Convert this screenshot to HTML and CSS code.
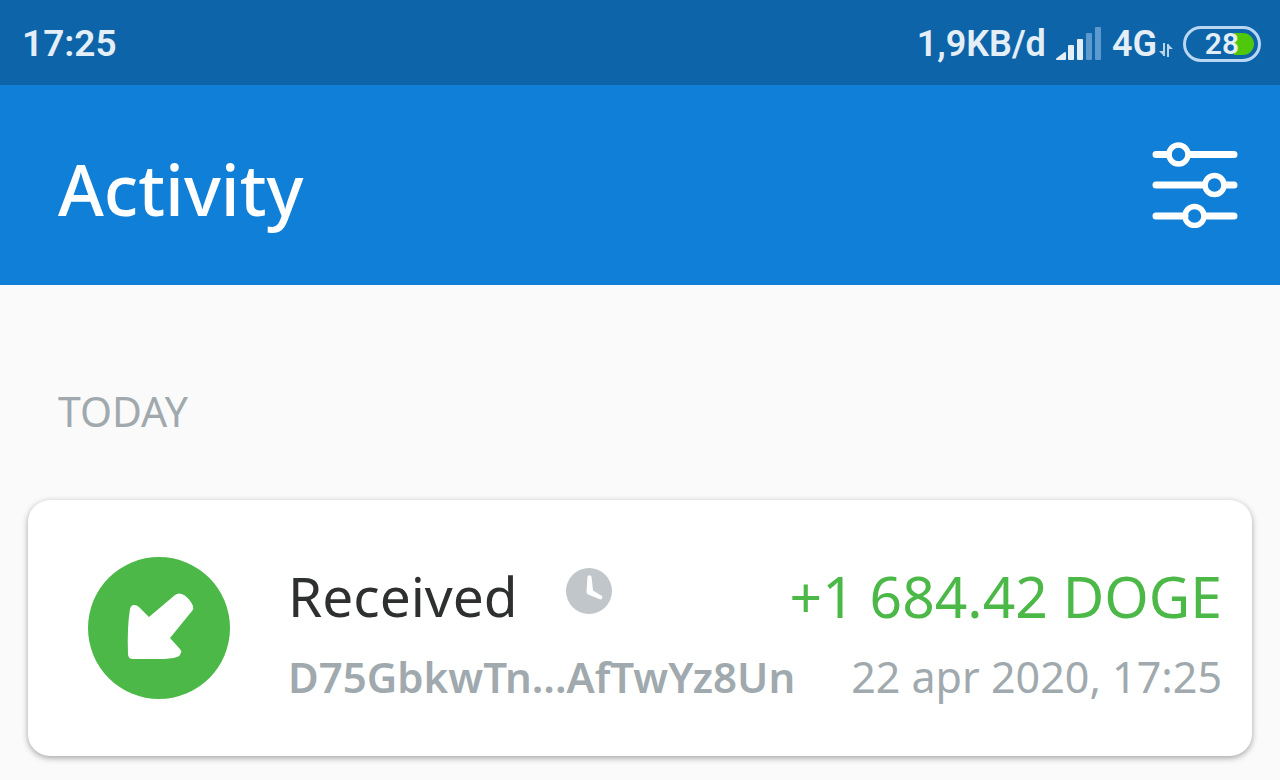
FILE: index.html
```html
<!DOCTYPE html>
<html lang="en">
  <head>
    <meta charset="UTF-8" />
    <meta name="viewport" content="width=device-width, initial-scale=1.0" />
    <title>Activity</title>
    <link rel="stylesheet" href="styles.css">
  </head>
  <body>
    <div class="status-bar">
      <span class="status-time">17:25</span>
      <div class="status-right">
        <span>1,9KB/d</span>
        <svg class="signal-icon" width="46" height="34" viewBox="0 0 46 34" aria-hidden="true">
          <path d="M1 32 L9 26 V32 Z" fill="#e4eef7" stroke="#e4eef7" stroke-width="2" stroke-linejoin="round" />
          <rect x="12" y="18" width="6" height="15" rx="1" fill="#e4eef7" />
          <rect x="21" y="12" width="6" height="21" rx="1" fill="#e4eef7" />
          <rect x="30" y="6" width="6" height="27" rx="1" fill="#5b99cf" />
          <rect x="39" y="0" width="6" height="33" rx="1" fill="#5b99cf" />
        </svg>
        <span>4G</span>
        <svg class="data-icon" width="14" height="14" viewBox="0 0 14 14" aria-hidden="true">
          <path d="M5 0 V13 L0 8 H5 Z M9 14 V1 L14 6 H9 Z" fill="#b9d3ea" />
          <path d="M5 0 V13 M9 14 V1" stroke="#b9d3ea" stroke-width="2" />
        </svg>
        <div class="battery">
          <span class="battery-level"></span>
          <span class="battery-text">28</span>
        </div>
      </div>
    </div>

    <header class="header">
      <h1 class="title">Activity</h1>
      <button type="button" class="filter-button" aria-label="Filter">
        <svg width="86" height="86" viewBox="0 0 86 86" fill="none" stroke="#fff" stroke-linecap="round">
          <path d="M4 12.500 H16 M38 12.500 H82 M4 43 H52 M74 43 H82 M4 74 H33 M54 74 H82" stroke-width="7" />
          <circle cx="26.500" cy="12.500" r="9.500" stroke-width="5.500" />
          <circle cx="62.500" cy="43" r="9.500" stroke-width="5.500" />
          <circle cx="42.500" cy="74" r="9.500" stroke-width="5.500" />
        </svg>
      </button>
    </header>

    <main class="content">
      <h2 class="day">TODAY</h2>

      <div class="card">
        <svg class="card-icon" width="142" height="142" viewBox="0 0 142 142" aria-hidden="true">
          <circle cx="71" cy="71" r="71" fill="#4bb848" />
          <path d="M42 52 Q43 48 46 48 Q49 48 51 50 L61 60 L87 38 Q91 35 96 38 Q102 42 105 49 Q106 52 104 54 L82 81 L92 92 Q94 94 93 96 Q92 99 89 100 Q83 102 70 102 L45 102 Q40 102 40 97 Q39 70 42 52 Z" fill="#fff" />
        </svg>
        <div class="card-info">
          <div class="row main-row">
            <span class="type">Received</span>
            <svg class="clock-icon" width="46" height="46" viewBox="0 0 46 46" aria-hidden="true">
              <circle cx="23" cy="23" r="23" fill="#c0c6c9" />
              <path d="M21.500 8.500 Q23.500 6 25.500 8.500 L27 22.500 L36 28 Q37 31 34.500 31.500 L22 26.500 Q20 25 20.500 23 Z" fill="#fff" />
            </svg>
            <span class="amount">+1 684.42 DOGE</span>
          </div>
          <div class="row sub-row">
            <span class="address">D75GbkwTn...AfTwYz8Un</span>
            <time class="date" datetime="2020-04-22T17:25">22 apr 2020, 17:25</time>
          </div>
        </div>
      </div>
    </main>
  </body>
</html>
```
FILE: styles.css
```css
* {
    box-sizing: border-box;
}

body {
    font-family: 'Noto Sans', sans-serif;
    background-color: #fafafa;
    margin: 0;
}

.status-bar {
    display: flex;
    justify-content: space-between;
    align-items: center;
    height: 85px;
    padding: 2px 19px 0 22px;
    background-color: #0d64a9;
    color: #e4eef7;
    font-family: Roboto, sans-serif;
    font-size: 37px;
    font-weight: 600;
}

.status-right {
    display: flex;
    align-items: center;
    gap: 10px;
    font-size: 36px;
}

.data-icon {
    margin: 12px 0 0 -8px;
}

.battery {
    position: relative;
    width: 78px;
    height: 36px;
    border: 3px solid #b9d7f2;
    border-radius: 18px;
    font-size: 30px;
    line-height: 30px;
    text-align: center;
}

.battery-level {
    position: absolute;
    top: 4px;
    right: 4px;
    width: 20px;
    height: 22px;
    border-radius: 0 11px 11px 0;
    background-color: #4fc70a;
}

.battery-text {
    position: relative;
}

.header {
    display: flex;
    justify-content: space-between;
    align-items: center;
    height: 200px;
    padding: 0 42px 0 58px;
    background-color: #107fd7;
}

.title {
    margin: 8px 0 0;
    color: #fff;
    font-size: 70px;
    font-weight: 500;
    line-height: 90px;
}

.filter-button {
    padding: 0;
    border: none;
    background: none;
    cursor: pointer;
}

.filter-button svg {
    display: block;
}

.content {
    padding: 96px 28px 24px;
}

.day {
    margin: 0 30px 59px;
    color: #a0a9ad;
    font-size: 41px;
    font-weight: 400;
    line-height: 60px;
}

.card {
    display: flex;
    align-items: center;
    gap: 58px;
    min-height: 256px;
    padding: 40px 30px 40px 60px;
    border-radius: 22px;
    background-color: #fff;
    box-shadow: 0 2px 6px rgba(0, 0, 0, 0.35);
}

.card-icon {
    flex-shrink: 0;
}

.card-info {
    flex: 1;
    padding-top: 14px;
    white-space: nowrap;
}

.row {
    display: flex;
    align-items: center;
}

.main-row {
    font-size: 57px;
    line-height: 84px;
}

.sub-row {
    justify-content: space-between;
    color: #a0a9ad;
    font-size: 42px;
    line-height: 78px;
}

.type {
    color: #2e3030;
    font-size: 55px;
}

.clock-icon {
    margin: 0 0 10px 48px;
}

.amount {
    margin-left: auto;
    color: #4bb848;
}

.address {
    font-weight: 600;
}

.date {
    font-size: 43px;
}
```
